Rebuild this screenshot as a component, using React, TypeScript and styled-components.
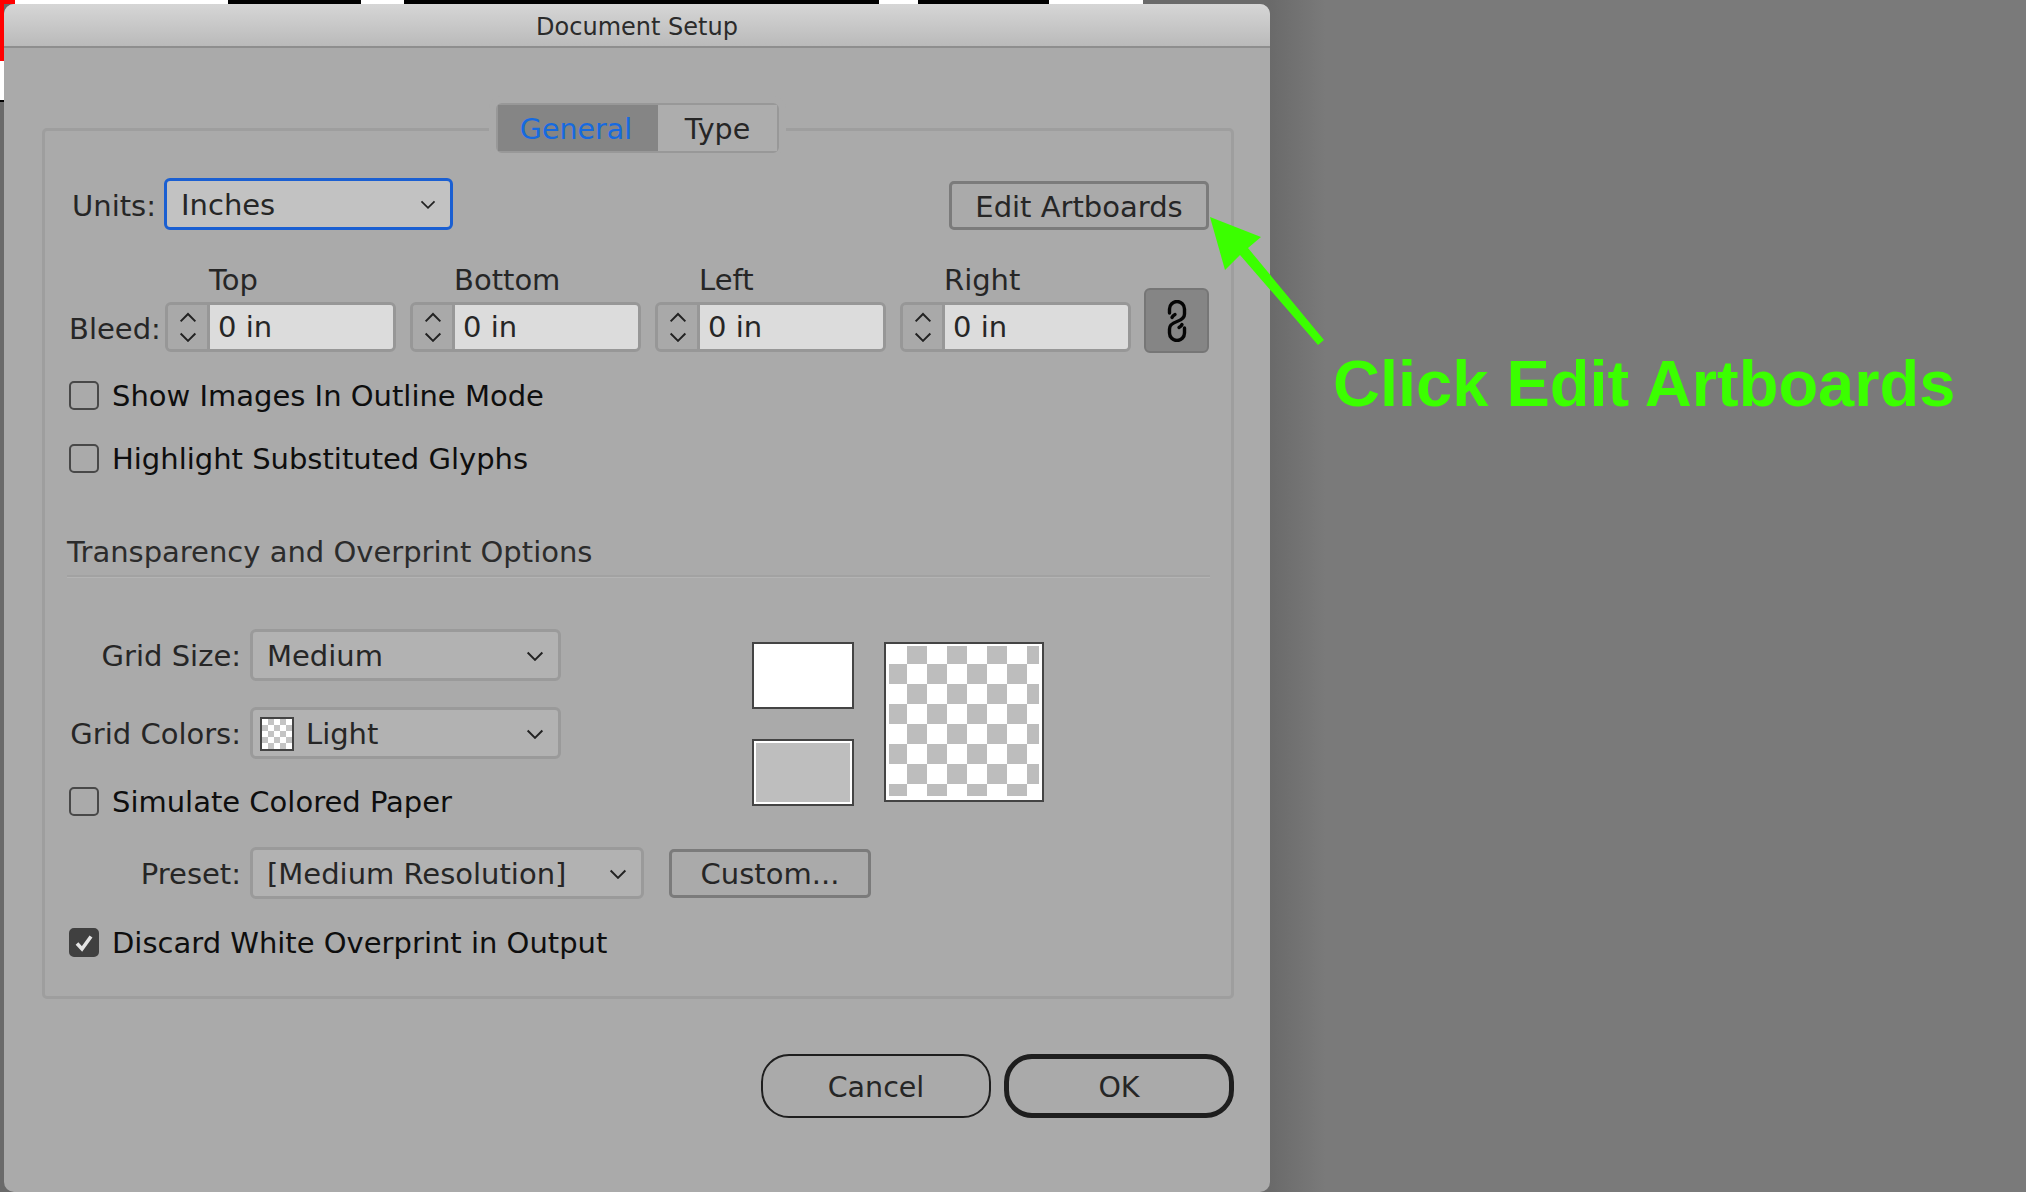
import React from "react";
import styled, { createGlobalStyle } from "styled-components";

const GlobalStyle = createGlobalStyle`
  html, body { margin: 0; padding: 0; background: #797979; }
  * { box-sizing: border-box; }
`;

const Page = styled.div`
  position: relative;
  width: 2026px;
  height: 1192px;
  overflow: hidden;
  background: linear-gradient(90deg, #6a6a6a 1270px, #7a7a7a 1325px);
  font-family: "DejaVu Sans", "Noto Sans", sans-serif;
  color: #262626;
`;

/* the document peeking out behind the dialog */
const DocStrip = styled.div`
  position: absolute;
  left: 0;
  top: 0;
  width: 1143px;
  height: 4px;
  background: linear-gradient(
    90deg,
    #f00 15px,
    #fff 15px 228px,
    #000 228px 361px,
    #fff 361px 404px,
    #000 404px 879px,
    #fff 879px 918px,
    #000 918px 1049px,
    #fff 1049px
  );
`;

const DocEdge = styled.div`
  position: absolute;
  left: 0;
  top: 0;
  width: 4px;
  height: 102px;
  background: linear-gradient(180deg, #f00 61px, #fff 61px 100px, #000 100px);
`;

const Dialog = styled.div`
  position: relative;
  margin: 4px 0 0 4px;
  width: 1266px;
  height: 1188px;
  background: #aaaaaa;
  border-radius: 10px;
  overflow: hidden;
`;

const TitleBar = styled.div`
  height: 44px;
  padding-top: 3px;
  display: flex;
  align-items: center;
  justify-content: center;
  background: linear-gradient(180deg, #d6d6d6, #bababa);
  border-bottom: 2px solid #8e8e8e;
  font-size: 24px;
  color: #2b2b2b;
`;

const Group = styled.div`
  position: relative;
  margin: 80px 36px 0 38px;
  padding: 47px 22px 39px 24px;
  height: 871px;
  border: 3px solid #9e9e9e;
  border-radius: 5px;
`;

const Tabs = styled.div`
  position: absolute;
  left: 451px;
  top: -28px;
  display: flex;
  height: 50px;
  border: 2px solid #989898;
  border-radius: 6px;
  background: #aaaaaa;
  box-shadow: 0 0 0 7px #aaaaaa;
  clip-path: inset(-7px -7px 0 -7px round 6px);
`;

const Tab = styled.div<{ $active?: boolean }>`
  display: flex;
  align-items: center;
  justify-content: center;
  padding: 3px ${(p) => (p.$active ? 4 : 0)}px 0 0;
  width: ${(p) => (p.$active ? 160 : 119)}px;
  font-size: 28.5px;
  background: ${(p) => (p.$active ? "#858585" : "#adadad")};
  color: ${(p) => (p.$active ? "#166ae0" : "#262626")};
`;

const TopRow = styled.div`
  display: flex;
  align-items: flex-end;
  justify-content: space-between;
`;

const UnitsField = styled.div`
  display: flex;
  align-items: center;
`;

const FieldLabel = styled.div<{ $width?: number }>`
  width: ${(p) => (p.$width ? `${p.$width}px` : "auto")};
  padding-top: 2px;
  font-size: 29px;
  line-height: 34px;
  text-align: right;
  white-space: nowrap;
`;

const UnitsLabel = styled(FieldLabel)`
  width: 95px;
  padding: 3px 8px 0 0;
`;

const Select = styled.div<{ $focus?: boolean; $width: number }>`
  display: flex;
  align-items: center;
  width: ${(p) => p.$width}px;
  height: 52px;
  padding: 2px 14px 0;
  border: 3px solid ${(p) => (p.$focus ? "#1a5fd2" : "#9a9a9a")};
  border-radius: 6px;
  background: ${(p) => (p.$focus ? "#c2c2c2" : "#b2b2b2")};
  font-size: 29px;
  color: #262626;
`;

const SelectText = styled.span`
  flex: 1;
  white-space: nowrap;
`;

const Swatchlet = styled.span`
  width: 34px;
  height: 34px;
  margin: 0 12px 0 -7px;
  border: 2px solid #444;
  background: repeating-conic-gradient(#c4c4c4 0 25%, #fff 0 50%) 0 0 / 12px 12px;
`;

const Button = styled.div<{ $width: number; $gapLeft?: number }>`
  display: flex;
  align-items: center;
  justify-content: center;
  width: ${(p) => p.$width}px;
  height: 49px;
  margin-left: ${(p) => p.$gapLeft ?? 0}px;
  padding-top: 2px;
  border: 3px solid #7b7b7b;
  border-radius: 5px;
  font-size: 29px;
  color: #262626;
  white-space: nowrap;
`;

const BleedRow = styled.div`
  display: flex;
  align-items: flex-end;
  margin-top: 33px;
`;

const BleedLabel = styled(FieldLabel)`
  width: 96px;
  text-align: left;
  margin-bottom: 1px;
  padding: 0 0 6px;
`;

const BleedFields = styled.div`
  display: flex;
  align-items: flex-end;
  gap: 14px;
`;

const BleedField = styled.div`
  display: flex;
  flex-direction: column;
  gap: 5px;
  width: 231px;
  margin-bottom: 1px;
`;

const BleedCaption = styled.div`
  padding: 1px 0 0 44px;
  font-size: 29px;
  line-height: 33px;
`;

const Stepper = styled.div`
  display: flex;
  height: 50px;
  border: 3px solid #979797;
  border-radius: 6px;
  overflow: hidden;
`;

const Arrows = styled.div`
  flex: none;
  width: 42px;
  display: flex;
  flex-direction: column;
  align-items: center;
  justify-content: center;
  gap: 9px;
  background: #a9a9a9;
  border-right: 3px solid #979797;
`;

const NumberInput = styled.div`
  flex: 1;
  display: flex;
  align-items: center;
  padding-left: 8px;
  background: #dcdcdc;
  font-size: 29px;
`;

const LinkButton = styled.div`
  display: flex;
  align-items: center;
  justify-content: center;
  width: 65px;
  height: 65px;
  margin-left: 13px;
  border: 2px solid #767676;
  border-radius: 6px;
  background: #858585;
`;

const CheckRow = styled.div<{ $top: number }>`
  display: flex;
  align-items: center;
  gap: 13px;
  height: 29px;
  margin-top: ${(p) => p.$top}px;
  font-size: 29px;
  color: #0e0e0e;
  white-space: nowrap;
`;

const Box = styled.span<{ $checked?: boolean }>`
  flex: none;
  display: flex;
  align-items: center;
  justify-content: center;
  width: 30px;
  height: 29px;
  border: 2px solid ${(p) => (p.$checked ? "#404040" : "#484848")};
  border-radius: 5px;
  background: ${(p) => (p.$checked ? "#404040" : "transparent")};
`;

const SectionTitle = styled.div`
  margin: 62px -1px 0 -2px;
  padding-bottom: 6px;
  border-bottom: 2px solid #a2a2a2;
  box-shadow: 0 1px 0 #b4b4b4;
  font-size: 29px;
  line-height: 34px;
  color: #2c2c2c;
`;

const LowerBlock = styled.div`
  display: flex;
  margin-top: 52px;
`;

const LeftColumn = styled.div`
  width: 683px;
  flex: none;
`;

const SelectRow = styled.div<{ $top?: number }>`
  display: flex;
  align-items: center;
  gap: 9px;
  margin-top: ${(p) => p.$top ?? 0}px;
`;

const Swatches = styled.div`
  display: flex;
  gap: 30px;
  margin-top: 13px;
`;

const SwatchStack = styled.div`
  display: flex;
  flex-direction: column;
  gap: 30px;
`;

const Swatch = styled.div<{ $gray?: boolean }>`
  width: 102px;
  height: 67px;
  border: 2px solid #444;
  background: ${(p) => (p.$gray ? "#bebebe" : "#fff")};
  box-shadow: ${(p) => (p.$gray ? "inset 0 0 0 2px #fff" : "none")};
`;

const Checker = styled.div`
  width: 160px;
  height: 160px;
  padding: 2px 3px 3px 3px;
  border: 2px solid #444;
  background: #fff;
`;

const CheckerGrid = styled.div`
  width: 150px;
  height: 150px;
  background: repeating-conic-gradient(#bdbdbd 0 25%, #fff 0 50%) -2px -2px / 40px 40px;
`;

const Footer = styled.div`
  display: flex;
  justify-content: flex-end;
  gap: 13px;
  margin: 55px 36px 0 0;
`;

const PillButton = styled.div<{ $primary?: boolean }>`
  display: flex;
  align-items: center;
  justify-content: center;
  width: 230px;
  height: 64px;
  padding-top: 2px;
  border: ${(p) => (p.$primary ? 5 : 2)}px solid #1e1e1e;
  border-radius: 28px;
  font-size: 28.5px;
  color: #262626;
`;

const ArrowMark = styled.svg`
  position: absolute;
  left: 1200px;
  top: 210px;
`;

const Callout = styled.div`
  position: absolute;
  left: 1333px;
  top: 344px;
  font-family: "Liberation Sans", Arial, sans-serif;
  font-weight: 700;
  font-size: 65px;
  line-height: 80px;
  color: #3bff00;
  white-space: nowrap;
`;

const Chevron = ({ up, size = 18 }: { up?: boolean; size?: number }) => (
  <svg width={size} height={size * 0.6} viewBox="0 0 18 11" fill="none" style={{ flex: "none" }}>
    <path
      d={up ? "M1.5 9.5 9 2l7.5 7.5" : "M1.5 1.5 9 9l7.5-7.5"}
      stroke="#222"
      strokeWidth="2"
    />
  </svg>
);

const LinkIcon = () => (
  <svg width="20" height="42" viewBox="0 0 20 42" fill="none" stroke="#050505" strokeWidth="3.400" strokeLinecap="round">
    <path d="M2.500 13V9a7.500 7.500 0 0 1 15 0v5c0 4-3 6-7.500 7.500C5.500 23 2.500 25 2.500 29v4a7.500 7.500 0 0 0 15 0v-5" />
    <path d="M8 14.500c-1.500.8-2.500 1.800-3 3" />
    <path d="M12 27.500c1.500-.8 2.500-1.800 3-3" />
  </svg>
);

const bleeds = ["Top", "Bottom", "Left", "Right"];

const App: React.FC = () => {
  return (
    <Page>
      <GlobalStyle />
      <DocStrip />
      <DocEdge />
      <Dialog>
        <TitleBar>Document Setup</TitleBar>
        <Group>
          <Tabs>
            <Tab $active>General</Tab>
            <Tab>Type</Tab>
          </Tabs>

          <TopRow>
            <UnitsField>
              <UnitsLabel>Units:</UnitsLabel>
              <Select $focus $width={289}>
                <SelectText>Inches</SelectText>
                <Chevron size={16} />
              </Select>
            </UnitsField>
            <Button $width={260}>Edit Artboards</Button>
          </TopRow>

          <BleedRow>
            <BleedLabel>Bleed:</BleedLabel>
            <BleedFields>
              {bleeds.map((side) => (
                <BleedField key={side}>
                  <BleedCaption>{side}</BleedCaption>
                  <Stepper>
                    <Arrows>
                      <Chevron up />
                      <Chevron />
                    </Arrows>
                    <NumberInput>0 in</NumberInput>
                  </Stepper>
                </BleedField>
              ))}
            </BleedFields>
            <LinkButton>
              <LinkIcon />
            </LinkButton>
          </BleedRow>

          <CheckRow $top={28}>
            <Box />
            Show Images In Outline Mode
          </CheckRow>
          <CheckRow $top={34}>
            <Box />
            Highlight Substituted Glyphs
          </CheckRow>

          <SectionTitle>Transparency and Overprint Options</SectionTitle>

          <LowerBlock>
            <LeftColumn>
              <SelectRow>
                <FieldLabel $width={172}>Grid Size:</FieldLabel>
                <Select $width={311}>
                  <SelectText>Medium</SelectText>
                  <Chevron size={18} />
                </Select>
              </SelectRow>
              <SelectRow $top={26}>
                <FieldLabel $width={172}>Grid Colors:</FieldLabel>
                <Select $width={311}>
                  <Swatchlet />
                  <SelectText>Light</SelectText>
                  <Chevron size={18} />
                </Select>
              </SelectRow>
              <CheckRow $top={28}>
                <Box />
                Simulate Colored Paper
              </CheckRow>
            </LeftColumn>
            <Swatches>
              <SwatchStack>
                <Swatch />
                <Swatch $gray />
              </SwatchStack>
              <Checker>
                <CheckerGrid />
              </Checker>
            </Swatches>
          </LowerBlock>

          <SelectRow $top={31}>
            <FieldLabel $width={172}>Preset:</FieldLabel>
            <Select $width={394}>
              <SelectText>[Medium Resolution]</SelectText>
              <Chevron size={18} />
            </Select>
            <Button $width={202} $gapLeft={16}>
              Custom...
            </Button>
          </SelectRow>

          <CheckRow $top={29}>
            <Box $checked>
              <svg width="20" height="18" viewBox="0 0 20 18" fill="none">
                <path d="M3 9.500 8 15 17 2.500" stroke="#e4e4e4" strokeWidth="3.600" />
              </svg>
            </Box>
            Discard White Overprint in Output
          </CheckRow>
        </Group>

        <Footer>
          <PillButton>Cancel</PillButton>
          <PillButton $primary>OK</PillButton>
        </Footer>
      </Dialog>

      <ArrowMark width="140" height="145" viewBox="0 0 140 145">
        <polygon
          points="10,7 61,27 48,38 124,130 118,135 40,45 25,60"
          fill="#3bff00"
        />
      </ArrowMark>
      <Callout>Click Edit Artboards</Callout>
    </Page>
  );
};

export default App;
